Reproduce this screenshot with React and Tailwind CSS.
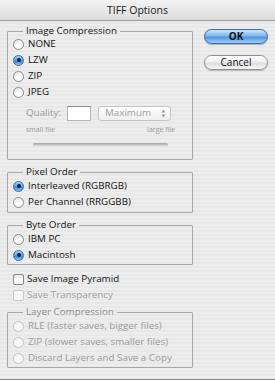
import React from "react";

function Radio({ checked, disabled }) {
  if (checked) {
    return (
      <span className="w-[11px] h-[11px] rounded-full border border-[#3f6fae] bg-[linear-gradient(180deg,#a9d0f5_0%,#5a9be0_50%,#3b82d6_55%,#8cc4f4_100%)] flex items-center justify-center shrink-0">
        <span className="w-[4px] h-[4px] rounded-full bg-[#0e2447]" />
      </span>
    );
  }
  return (
    <span
      className={
        disabled
          ? "w-[11px] h-[11px] rounded-full border border-[#c4c4c4] bg-[linear-gradient(180deg,#f2f2f2,#fbfbfb)] shrink-0"
          : "w-[11px] h-[11px] rounded-full border border-[#8c8c8c] bg-[linear-gradient(180deg,#e6e6e6_0%,#ffffff_60%,#f4f4f4_100%)] shrink-0"
      }
    />
  );
}

function RadioRow({ label, checked, disabled, className = "" }) {
  return (
    <div className={"h-4 flex items-center gap-[4px] " + className}>
      <Radio checked={checked} disabled={disabled} />
      <span className={disabled ? "text-[#9a9a9a]" : "text-[#111]"}>{label}</span>
    </div>
  );
}

function CheckRow({ label, disabled, className = "" }) {
  return (
    <div className={"h-4 flex items-center gap-[3px] ml-[6px] " + className}>
      <span
        className={
          disabled
            ? "w-[11px] h-[11px] rounded-[2px] border border-[#c8c8c8] bg-[#f6f6f6] shrink-0"
            : "w-[11px] h-[11px] rounded-[2px] border border-[#8a8a8a] bg-[linear-gradient(180deg,#e8e8e8_0%,#ffffff_60%,#f4f4f4_100%)] shrink-0"
        }
      />
      <span className={disabled ? "text-[#a0a0a0]" : "text-[#111]"}>{label}</span>
    </div>
  );
}

function Group({ title, children, className = "", disabled }) {
  return (
    <fieldset
      className={
        "w-[186px] border border-[#a8a8a8] rounded-[1px] px-[5px] m-0 " + className
      }
    >
      <legend
        className={
          "ml-[10px] px-[3px] leading-[12px] " +
          (disabled ? "text-[#8e8e8e]" : "text-[#111]")
        }
      >
        {title}
      </legend>
      {children}
    </fieldset>
  );
}

export default function App() {
  return (
    <div className="w-[275px] h-[380px] overflow-hidden border-b border-[#8a8a8a] bg-[repeating-linear-gradient(180deg,#ededed_0px,#ededed_2px,#e8e8e8_2px,#e8e8e8_4px)] font-['Open_Sans',sans-serif] text-[9.8px] leading-4">
      <div className="h-[21px] border-b border-[#9c9c9c] bg-[linear-gradient(180deg,#f4f4f4_0%,#dcdcdc_100%)] flex items-center justify-center text-[10.5px] font-medium text-[#1a1a1a]">
        TIFF Options
      </div>
      <div className="flex">
        <div className="pl-[7px] w-[193px] shrink-0 flex flex-col">
          <Group title="Image Compression" className="mt-[4px]">
            <RadioRow label="NONE" className="-mt-[1px]" />
            <RadioRow label="LZW" checked />
            <RadioRow label="ZIP" />
            <RadioRow label="JPEG" />
            <div className="h-4 mt-[5px] flex items-center">
              <span className="ml-[13px] w-[41px] text-[#9a9a9a]">Quality:</span>
              <span className="w-[24px] h-[15px] bg-white border border-[#b4b4b4] border-t-[#8e8e8e]" />
              <span className="ml-[7px] w-[73px] h-[15px] rounded-[3px] border border-[#c4c4c4] bg-[linear-gradient(180deg,#ffffff,#efefef)] flex items-center justify-between pl-[6px] pr-[4px] text-[#9c9c9c]">
                Maximum
                <svg width="5" height="9" viewBox="0 0 5 9">
                  <path d="M2.5 0.5 L4.5 3.5 L0.5 3.5 Z" fill="#9a9a9a" />
                  <path d="M2.5 8.5 L4.5 5.5 L0.5 5.5 Z" fill="#9a9a9a" />
                </svg>
              </span>
            </div>
            <div className="h-[10px] mt-[4px] ml-[13px] w-[149px] flex items-center justify-between text-[7px] leading-[10px] text-[#9a9a9a]">
              <span>small file</span>
              <span>large file</span>
            </div>
            <div className="mt-[8px] mb-[13px] ml-[20px] w-[135px] h-[3px] rounded-full bg-[linear-gradient(180deg,#a6a6a6,#d8d8d8)]" />
          </Group>
          <Group title="Pixel Order" className="mt-[6px] pb-[2px]">
            <RadioRow label="Interleaved (RGBRGB)" checked />
            <RadioRow label="Per Channel (RRGGBB)" />
          </Group>
          <Group title="Byte Order" className="mt-[6px] pb-[1px]">
            <RadioRow label="IBM PC" />
            <RadioRow label="Macintosh" checked />
          </Group>
          <CheckRow label="Save Image Pyramid" className="mt-[6px]" />
          <CheckRow label="Save Transparency" disabled />
          <Group title="Layer Compression" className="mt-[3px] pb-[1px]" disabled>
            <RadioRow label="RLE (faster saves, bigger files)" disabled />
            <RadioRow label="ZIP (slower saves, smaller files)" disabled />
            <RadioRow label="Discard Layers and Save a Copy" disabled />
          </Group>
        </div>
        <div className="ml-[11px] flex flex-col">
          <button className="mt-[8px] w-[64px] h-[15px] rounded-full border border-[#3d68a8] bg-[linear-gradient(180deg,#cfe6fb_0%,#7fb6ee_45%,#4f95e2_55%,#9fd0f8_100%)] text-[10px] font-bold leading-[13px] text-[#111] shadow-[0_1px_1px_rgba(0,0,0,0.25)]">
            OK
          </button>
          <button className="mt-[11px] w-[64px] h-[15px] rounded-full border border-[#8e8e8e] bg-[linear-gradient(180deg,#ffffff_0%,#f0f0f0_45%,#dedede_55%,#f8f8f8_100%)] text-[10px] leading-[13px] text-[#111] shadow-[0_1px_1px_rgba(0,0,0,0.2)]">
            Cancel
          </button>
        </div>
      </div>
    </div>
  );
}
